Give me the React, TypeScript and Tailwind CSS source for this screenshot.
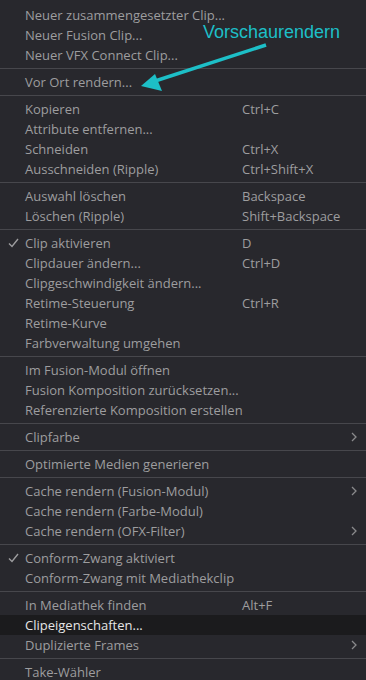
import React from "react";

type Item = { label: string; shortcut?: string; check?: boolean; sub?: boolean; active?: boolean };
type Group = Item[];

const groups: Group[] = [
  [
    { label: "Neuer zusammengesetzter Clip..." },
    { label: "Neuer Fusion Clip..." },
    { label: "Neuer VFX Connect Clip..." },
  ],
  [{ label: "Vor Ort rendern..." }],
  [
    { label: "Kopieren", shortcut: "Ctrl+C" },
    { label: "Attribute entfernen..." },
    { label: "Schneiden", shortcut: "Ctrl+X" },
    { label: "Ausschneiden (Ripple)", shortcut: "Ctrl+Shift+X" },
  ],
  [
    { label: "Auswahl löschen", shortcut: "Backspace" },
    { label: "Löschen (Ripple)", shortcut: "Shift+Backspace" },
  ],
  [
    { label: "Clip aktivieren", shortcut: "D", check: true },
    { label: "Clipdauer ändern...", shortcut: "Ctrl+D" },
    { label: "Clipgeschwindigkeit ändern..." },
    { label: "Retime-Steuerung", shortcut: "Ctrl+R" },
    { label: "Retime-Kurve" },
    { label: "Farbverwaltung umgehen" },
  ],
  [
    { label: "Im Fusion-Modul öffnen" },
    { label: "Fusion Komposition zurücksetzen..." },
    { label: "Referenzierte Komposition erstellen" },
  ],
  [{ label: "Clipfarbe", sub: true }],
  [{ label: "Optimierte Medien generieren" }],
  [
    { label: "Cache rendern (Fusion-Modul)", sub: true },
    { label: "Cache rendern (Farbe-Modul)" },
    { label: "Cache rendern (OFX-Filter)", sub: true },
  ],
  [
    { label: "Conform-Zwang aktiviert", check: true },
    { label: "Conform-Zwang mit Mediathekclip" },
  ],
  [
    { label: "In Mediathek finden", shortcut: "Alt+F" },
    { label: "Clipeigenschaften...", active: true },
    { label: "Duplizierte Frames", sub: true },
  ],
  [{ label: "Take-Wähler" }],
];

function Row({ item }: { item: Item }) {
  return (
    <div
      className={`relative flex h-[20px] items-center ${
        item.active ? "bg-[#1b1b1d] text-[#e6e6e6]" : "text-[#9d9d9f]"
      }`}
    >
      <div className="flex w-[25px] shrink-0 justify-center pl-[2px]">
        {item.check && (
          <svg width="11" height="10" viewBox="0 0 11 10" className="ml-[0px]">
            <path d="M1 5.5 L4 8.5 L10 1" fill="none" stroke="#9d9d9f" strokeWidth="1.4" />
          </svg>
        )}
      </div>
      <div className="w-[217px] shrink-0 whitespace-nowrap">{item.label}</div>
      <div className="flex-1 whitespace-nowrap">{item.shortcut}</div>
      {item.sub && (
        <div className="pr-[9px]">
          <svg width="6" height="10" viewBox="0 0 6 10">
            <path d="M1 1 L5 5 L1 9" fill="none" stroke="#8a8a8c" strokeWidth="1.3" />
          </svg>
        </div>
      )}
    </div>
  );
}

export default function App() {
  return (
    <div
      className="relative h-[680px] w-[366px] overflow-hidden bg-[#28282d] pt-[5px] text-[13px] leading-[20px]"
      style={{ fontFamily: '"Open Sans", "Noto Sans", sans-serif' }}
    >
      {groups.map((g, gi) => (
        <div key={gi}>
          {gi > 0 && (
            <div className="flex h-[7px] items-center">
              <div className="h-px w-full bg-[#47474c]" />
            </div>
          )}
          {g.map((it, i) => (
            <Row key={i} item={it} />
          ))}
        </div>
      ))}
      <div
        className="absolute left-[203px] top-[21px] text-[18px] leading-[22px] text-[#1dbfc7]"
        style={{ fontFamily: '"Liberation Sans", Arial, sans-serif' }}
      >
        Vorschaurendern
      </div>
      <svg className="absolute left-0 top-0" width="366" height="120" viewBox="0 0 366 120">
        <line x1="266" y1="45" x2="152" y2="82" stroke="#1dbfc7" strokeWidth="3.5" />
        <polygon points="141,86 155,74 162,91" fill="#1dbfc7" />
      </svg>
    </div>
  );
}
